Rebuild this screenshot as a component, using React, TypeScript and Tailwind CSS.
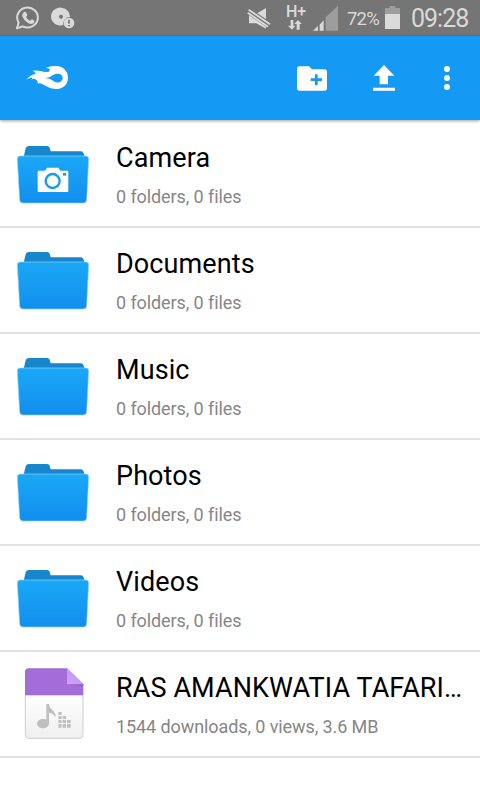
import type { ReactNode } from 'react';

const folders = ['Camera', 'Documents', 'Music', 'Photos', 'Videos'];

export default function App() {
  return (
    <div className="w-[480px] h-[800px] bg-white overflow-hidden font-['Roboto',sans-serif]">
      <StatusBar />
      <AppBar />
      <main className="pt-[2px]">
        {folders.map((name) => (
          <Row
            key={name}
            icon={<FolderIcon camera={name === 'Camera'} />}
            title={name}
            detail="0 folders, 0 files"
          />
        ))}
        <Row
          icon={<AudioFileIcon />}
          title="RAS AMANKWATIA TAFARI…"
          detail="1544 downloads, 0 views, 3.6 MB"
        />
      </main>
    </div>
  );
}

function StatusBar() {
  return (
    <div className="h-9 bg-[#757575] flex items-center text-[#dadada]">
      <svg className="ml-4 shrink-0" width="24" height="24" viewBox="0 0 72 72" fill="none">
        <path
          d="M3 67L8 50A31 30 0 1 1 20 61Z"
          stroke="currentColor"
          strokeWidth="6"
          strokeLinejoin="round"
        />
        <path
          d="M23 19Q27 16 30 19L34 27Q34 30 30 33Q34 41 42 45Q45 40 48 40L55 44Q56 48 53 51Q46 57 35 50Q23 43 19 31Q18 24 23 19Z"
          fill="currentColor"
        />
      </svg>
      <svg className="ml-[11px] shrink-0" width="24" height="24" viewBox="0 0 72 72">
        <path
          fillRule="evenodd"
          d="M30 5A27 27 0 1 0 37 57A20 20 0 0 1 57 33A27 27 0 0 0 30 5ZM30 26A6 6 0 1 1 30 38A6 6 0 1 1 30 26Z"
          fill="currentColor"
        />
        <circle cx="54" cy="51" r="16" fill="currentColor" />
        <path d="M54 41V53M54 57V61" stroke="#757575" strokeWidth="5" />
      </svg>

      <svg className="ml-[172px] shrink-0" width="24" height="24" viewBox="0 0 72 72">
        <path d="M6 23H28L57 6V68L28 52H6Z" fill="currentColor" />
        <path d="M0 12L72 61" stroke="#757575" strokeWidth="19" />
        <path d="M5 11L69 55M2 20L63 62" stroke="currentColor" strokeWidth="5.5" />
      </svg>

      <div className="ml-[15px] w-[21px] h-9 shrink-0">
        <div className="pt-1 text-[16px] leading-[15px] font-medium tracking-[-0.2px]">H+</div>
        <svg className="ml-[2px] mt-px" width="14" height="10" viewBox="0 0 42 30">
          <path
            d="M8 0H16V17H22L12 29L0 17H8ZM26 29V12H19L30 0L41 12H35V29Z"
            fill="currentColor"
          />
        </svg>
      </div>

      <svg className="ml-[6px] shrink-0" width="25" height="26" viewBox="0 0 75 78">
        <path d="M38 37L75 2V77H38Z" fill="#9d9d9d" />
        <path d="M0 77L15 63V77ZM20 59L32 46V77H20Z" fill="currentColor" />
      </svg>

      <span className="ml-[9px] mt-[2px] w-[34px] shrink-0 text-[18.5px] leading-6 tracking-[-0.8px] whitespace-nowrap">
        72%
      </span>
      <svg className="ml-1 mt-[-1px] shrink-0" width="15" height="23" viewBox="0 0 45 69">
        <path d="M0 6H14V0H31V6H45V69H0Z" fill="#9d9d9d" />
        <path d="M0 24H45V69H0Z" fill="currentColor" />
      </svg>
      <span className="ml-[11px] mt-[2px] text-[25px] leading-8 tracking-[-1px] whitespace-nowrap">
        09:28
      </span>
    </div>
  );
}

function AppBar() {
  return (
    <header className="h-[84px] bg-[#1499f5] flex items-center text-white shadow-[0_1px_3px_rgba(0,0,0,0.4)]">
      <svg className="ml-[26px] mt-[-1px] shrink-0" width="43" height="25" viewBox="78 195 129 75">
        <path
          fillRule="evenodd"
          d="M79 239Q91 224 107 222Q105 215 98 212Q111 210 122 213Q132 217 145 216Q152 212 148 207Q145 204 137 204Q151 197 168 198C190 199 204 213 204 233C204 254 189 267 168 267C150 267 139 259 128 253Q117 247 113 252Q115 242 105 237Q99 235 94 239Q99 233 95 233Q87 233 79 239ZM137 235Q149 234 158 226C169 217 188 220 188 234C188 249 169 251 159 242Q150 235 137 235Z"
          fill="currentColor"
        />
      </svg>
      <svg className="ml-[228px] shrink-0" width="30" height="25" viewBox="0 0 90 75">
        <path
          fillRule="evenodd"
          d="M7 1H36L45 10H82Q90 10 90 18V66Q90 74 82 74H8Q0 74 0 66V9Q0 1 7 1ZM54 25V37H41V45H54V58H62V45H75V37H62V25Z"
          fill="currentColor"
        />
      </svg>
      <svg className="ml-[46px] mt-[-1px] shrink-0" width="22" height="26" viewBox="0 0 66 78">
        <path d="M33 0L64 32H45V58H20V32H2ZM0 68H66V77H0Z" fill="currentColor" />
      </svg>
      <svg className="ml-[49px] shrink-0" width="6" height="26" viewBox="0 0 18 78">
        <circle cx="9" cy="12" r="9" fill="currentColor" />
        <circle cx="9" cy="39" r="9" fill="currentColor" />
        <circle cx="9" cy="66" r="9" fill="currentColor" />
      </svg>
    </header>
  );
}

type RowProps = {
  icon: ReactNode;
  title: string;
  detail: string;
};

function Row({ icon, title, detail }: RowProps) {
  return (
    <div className="h-[106px] flex border-b-2 border-[#e2e2e2]">
      <div className="w-[116px] pl-[17px] shrink-0">{icon}</div>
      <div className="min-w-0 flex-1 pt-5">
        <div className="whitespace-nowrap text-[27px] leading-8 tracking-[0.1px] text-black">
          {title}
        </div>
        <div className="mt-[11px] text-[18px] leading-6 tracking-[-0.09px] text-[#868686]">
          {detail}
        </div>
      </div>
    </div>
  );
}

function FolderIcon({ camera }: { camera: boolean }) {
  return (
    <svg className="mt-[23px]" width="73" height="60" viewBox="0 0 219 180">
      <defs>
        <linearGradient id="folder" x1="0" y1="0" x2="0" y2="1">
          <stop offset="0" stopColor="#1ba8f6" />
          <stop offset="1" stopColor="#118eef" />
        </linearGradient>
      </defs>
      <path
        d="M19 40L26 10Q28 3 36 3H91Q98 3 99 11L101 19H191Q200 19 202 33V48H19Z"
        fill="#1786cd"
      />
      <path
        d="M10 33H206Q216 33 215 43L209 165Q208 174 199 174H18Q9 174 8 165L1 43Q0 33 10 33Z"
        fill="url(#folder)"
        stroke="#8ed4fb"
        strokeWidth="2"
      />
      {camera && (
        <g>
          <path
            d="M66 77H84L90 68H124L130 77H150Q154 77 154 81V137Q154 141 150 141H66Q62 141 62 137V81Q62 77 66 77Z"
            fill="white"
          />
          <circle cx="107" cy="108" r="21" fill="none" stroke="#179cf1" strokeWidth="7" />
          <path d="M138 84H147V92H138Z" fill="#179cf1" />
        </g>
      )}
    </svg>
  );
}

function AudioFileIcon() {
  return (
    <svg className="ml-[7px] mt-4" width="60" height="72" viewBox="0 0 180 216">
      <defs>
        <linearGradient id="paper" x1="0" y1="0" x2="0" y2="1">
          <stop offset="0" stopColor="#ffffff" />
          <stop offset="1" stopColor="#efefef" />
        </linearGradient>
        <linearGradient id="fold" x1="0" y1="1" x2="1" y2="0">
          <stop offset="0" stopColor="#cfa5fb" />
          <stop offset="1" stopColor="#bd8bed" />
        </linearGradient>
      </defs>
      <path
        d="M4 80H177V200Q177 211 166 211H15Q4 211 4 200Z"
        fill="url(#paper)"
        stroke="#cecece"
        strokeWidth="3"
      />
      <path d="M3 82V12Q3 1 14 1H129L178 49V82Z" fill="#a46cd8" />
      <path d="M129 49H178V54Z" fill="#8e58c1" />
      <path d="M129 1L178 49H129Z" fill="url(#fold)" />
      <ellipse cx="57" cy="167" rx="18" ry="14" fill="#bfbfbf" />
      <path
        d="M67 108H75C76 122 84 123 90 131Q97 140 94 147C89 137 82 134 75 134V167H67Z"
        fill="#bfbfbf"
      />
      <path
        d="M103 132h10v9h-10zM103 144h10v9h-10zM103 156h10v9h-10zM103 168h10v11h-10zM116 144h10v9h-10zM116 156h10v9h-10zM116 168h10v11h-10zM129 156h11v9h-11zM129 168h11v11h-11z"
        fill="#c0c0c0"
      />
    </svg>
  );
}
